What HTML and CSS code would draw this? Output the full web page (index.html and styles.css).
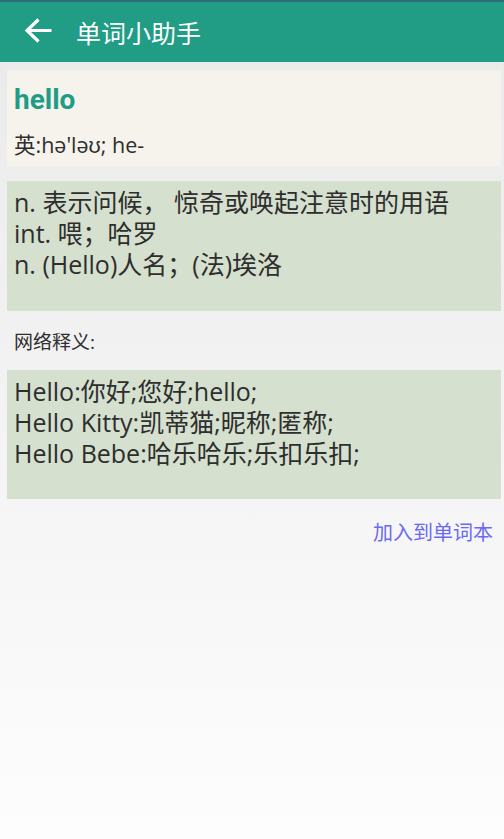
FILE: index.html
```html
<!DOCTYPE html>
<html lang="zh-CN">
<head>
<meta charset="utf-8">
<title>单词小助手</title>
<link rel="stylesheet" href="styles.css">
</head>
<body>
<header class="appbar">
  <svg class="back" width="30" height="30" viewBox="0 0 30 30" aria-hidden="true">
    <path d="M28.5 13.5 H5 M15.5 2.5 L4 13.5 L15.5 24.5" fill="none" stroke="#fff" stroke-width="3.2" stroke-linecap="butt" stroke-linejoin="miter"/>
  </svg>
  <h1 class="title">单词小助手</h1>
</header>
<main class="content">
  <section class="card card-word">
    <div class="word">hello</div>
    <div class="phonetic">英:hə'ləʊ; he-</div>
  </section>
  <section class="card card-def">
    <div class="line">n. 表示问候， 惊奇或唤起注意时的用语</div>
    <div class="line">int. 喂；哈罗</div>
    <div class="line">n. (Hello)人名；(法)埃洛</div>
  </section>
  <div class="label">网络释义:</div>
  <section class="card card-def card-web">
    <div class="line">Hello:你好;您好;hello;</div>
    <div class="line">Hello Kitty:凯蒂猫;昵称;匿称;</div>
    <div class="line">Hello Bebe:哈乐哈乐;乐扣乐扣;</div>
  </section>
  <div class="actions"><a class="add-link" href="#">加入到单词本</a></div>
</main>
</body>
</html>
```
FILE: styles.css
```css
html, body {
  margin: 0;
  padding: 0;
}
body {
  width: 504px;
  min-height: 839px;
  background: linear-gradient(to bottom, #ebebeb 0px, #ebebeb 62px, #fdfdfd 839px);
  font-family: "Open Sans", "Noto Sans CJK SC", sans-serif;
  color: #2e2e2e;
}
.appbar {
  box-sizing: border-box;
  height: 62px;
  background: #209d84;
  border-top: 2px solid #2b6e7c;
  display: flex;
  align-items: center;
  padding-left: 23px;
}
.back {
  display: block;
}
.title {
  margin: 0 0 0 23px;
  font-size: 25px;
  font-weight: normal;
  color: #ffffff;
  line-height: 30px;
  font-family: "Noto Sans CJK SC", sans-serif;
}
.content {
  padding: 8px 3px 0 7px;
  display: flex;
  flex-direction: column;
}
.card {
  box-sizing: border-box;
  padding: 0 7px;
}
.card-word {
  background: #f5f3ec;
  height: 96px;
  padding-top: 14px;
}
.word {
  font-family: Roboto, sans-serif;
  font-size: 28px;
  font-weight: bold;
  color: #1f9d84;
  line-height: 32px;
}
.phonetic {
  margin-top: 16px;
  font-size: 21.5px;
  line-height: 26px;
}
.card-def {
  background: #d5e0ce;
  height: 130px;
  padding-top: 6px;
  margin-top: 15px;
}
.line {
  font-size: 25px;
  line-height: 31px;
  white-space: nowrap;
}
.label {
  font-size: 19px;
  line-height: 26px;
  padding: 18px 0 0 7px;
  margin-bottom: 15px;
}
.card-web {
  margin-top: 0;
  padding-top: 6px;
  height: 129px;
}
.actions {
  display: flex;
  justify-content: flex-end;
  padding: 20px 8px 0 0;
}
.add-link {
  font-size: 20px;
  line-height: 26px;
  color: #6a6af2;
  text-decoration: none;
  font-family: "Noto Sans CJK SC", sans-serif;
}
```
